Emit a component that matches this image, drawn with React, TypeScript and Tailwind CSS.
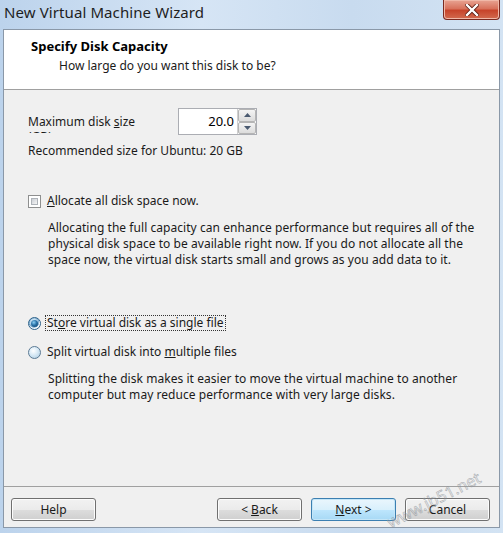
import React from "react";

const font = { fontFamily: '"Segoe UI", "Noto Sans", "Liberation Sans", sans-serif' };

function Btn({ children, primary }: { children: React.ReactNode; primary?: boolean }) {
  return (
    <div
      className={
        "w-[85px] h-[23px] rounded-[3px] border flex items-center justify-center text-[12px] text-[#1a1a1a] " +
        (primary
          ? "border-[#3c7fb1] bg-[linear-gradient(#eaf6fd_0%,#d9f0fc_50%,#bee6fd_51%,#a7d9f5_100%)] shadow-[inset_0_0_0_1px_#c4e6f8]"
          : "border-[#707070] bg-[linear-gradient(#f2f2f2_0%,#ebebeb_50%,#dddddd_51%,#cfcfcf_100%)] shadow-[inset_0_0_0_1px_#fcfcfc]")
      }
    >
      {children}
    </div>
  );
}

export default function App() {
  return (
    <div
      className="w-[503px] h-[533px] flex flex-col bg-[linear-gradient(90deg,#bcd3ec,#d6e5f5_40%,#c8dbef_70%,#d3e3f3)] relative overflow-hidden"
      style={font}
    >
      {/* title bar */}
      <div className="h-[29px] flex items-start justify-between pl-[4px] pr-[3px]">
        <div className="text-[15px] leading-[15px] mt-[5px] text-[#1e1e1e] tracking-[0.1px]">New Virtual Machine Wizard</div>
        <div className="w-[57px] h-[20px] rounded-b-[4px] border border-t-0 border-[#7a2a20] bg-[linear-gradient(#e8a493_0%,#d8725c_45%,#c7442b_55%,#d26b4f_100%)] flex items-center justify-center shadow-[inset_0_0_0_1px_#f0b8a8]">
          <svg width="14" height="12" viewBox="0 0 14 12">
            <path d="M2 1 L12 11 M12 1 L2 11" stroke="#5a1a10" strokeWidth="4" strokeLinecap="square" />
            <path d="M2 1 L12 11 M12 1 L2 11" stroke="#ffffff" strokeWidth="2.4" strokeLinecap="square" />
          </svg>
        </div>
      </div>

      {/* client area */}
      <div className="flex-1 mx-[3px] mb-[5px] border border-[#8a98a8] bg-[#f0f0f0] flex flex-col">
        {/* header */}
        <div className="h-[60px] bg-white border-b border-[#a0a0a0] pl-[27px] pt-[8px]">
          <div className="text-[13px] font-bold leading-[16px] text-black">Specify Disk Capacity</div>
          <div className="text-[12px] leading-[16px] mt-[4px] pl-[28px] text-[#1a1a1a]">How large do you want this disk to be?</div>
        </div>

        {/* body */}
        <div className="flex-1 pl-[24px] pr-[10px] pt-[18px] text-[12px] text-[#1a1a1a]">
          <div className="flex items-start">
            <div className="w-[125px] h-[19px] overflow-hidden leading-[15px] mt-[6px]">
              Maximum disk <span className="underline">s</span>ize (GB):
            </div>
            <div className="ml-[25px] w-[79px] h-[27px] border border-[#abadb3] bg-white flex">
              <div className="flex-1 text-right pr-[3px] text-[13px] leading-[25px] text-black">20.0</div>
              <div className="w-[19px] flex flex-col border-l border-[#d0d0d0]">
                <div className="flex-1 border border-[#b5b5b5] rounded-[2px] bg-[linear-gradient(#f4f4f4,#dcdcdc)] flex items-center justify-center">
                  <svg width="7" height="4" viewBox="0 0 7 4"><path d="M0 4 L3.5 0 L7 4 Z" fill="#4a5a70" /></svg>
                </div>
                <div className="flex-1 border border-[#b5b5b5] rounded-[2px] bg-[linear-gradient(#f4f4f4,#dcdcdc)] flex items-center justify-center">
                  <svg width="7" height="4" viewBox="0 0 7 4"><path d="M0 0 L3.5 4 L7 0 Z" fill="#4a5a70" /></svg>
                </div>
              </div>
            </div>
          </div>
          <div className="mt-[8px] leading-[16px]">Recommended size for Ubuntu: 20 GB</div>

          <div className="mt-[34px] flex items-center leading-[16px]">
            <div className="w-[13px] h-[13px] border border-[#8e8f8f] bg-white p-[2px] mr-[6px]">
              <div className="w-full h-full border border-[#aeb3b9] bg-[linear-gradient(135deg,#cbcfd5,#f6f6f6)]" />
            </div>
            <span><span className="underline">A</span>llocate all disk space now.</span>
          </div>
          <div className="mt-[11px] ml-[20px] leading-[16px] tracking-[0.05px]">
            Allocating the full capacity can enhance performance but requires all of the
            <br />
            physical disk space to be available right now. If you do not allocate all the
            <br />
            space now, the virtual disk starts small and grows as you add data to it.
          </div>

          <div className="mt-[48px] flex items-center leading-[14px]">
            <div className="w-[13px] h-[13px] rounded-full border border-[#2c628b] bg-[radial-gradient(circle_at_45%_40%,#e8f6ff_0%,#c6e0f2_35%,#7aa9cc_55%,#f4f8fb_62%)] flex items-center justify-center mr-[5px]">
              <div className="w-[7px] h-[7px] rounded-full bg-[radial-gradient(circle_at_40%_35%,#8ad0f4_0%,#2a72a8_45%,#0b3c64_100%)]" />
            </div>
            <span className="outline-1 outline-dotted outline-[#333] px-[1px]">
              St<span className="underline">o</span>re virtual disk as a single file
            </span>
          </div>
          <div className="mt-[15px] flex items-center leading-[14px]">
            <div className="w-[13px] h-[13px] rounded-full border border-[#5b7a94] bg-[radial-gradient(circle_at_40%_35%,#ffffff_0%,#dcecf7_40%,#a9c9df_100%)] mr-[6px]" />
            <span>
              Split virtual disk into <span className="underline">m</span>ultiple files
            </span>
          </div>
          <div className="mt-[12px] ml-[20px] leading-[16px] tracking-[0.05px]">
            Splitting the disk makes it easier to move the virtual machine to another
            <br />
            computer but may reduce performance with very large disks.
          </div>
        </div>

        {/* footer */}
        <div className="h-[41px] border-t border-[#a0a0a0] flex items-start pt-[11px] pl-[7px] pr-[9px]">
          <Btn>Help</Btn>
          <div className="flex-1" />
          <div className="flex gap-[9px]">
            <Btn>
              &lt; <span className="underline ml-[3px]">B</span>ack
            </Btn>
            <Btn primary>
              <span className="underline">N</span>ext &gt;
            </Btn>
            <Btn>Cancel</Btn>
          </div>
        </div>
      </div>

      {/* watermark */}
      <div className="absolute left-[388px] top-[512px] h-[22px] leading-[22px] text-[16px] whitespace-nowrap text-transparent [-webkit-text-stroke:0.5px_#8f959b] opacity-80 rotate-[-27deg] origin-left pointer-events-none">
        www.jb51.net
      </div>
    </div>
  );
}
